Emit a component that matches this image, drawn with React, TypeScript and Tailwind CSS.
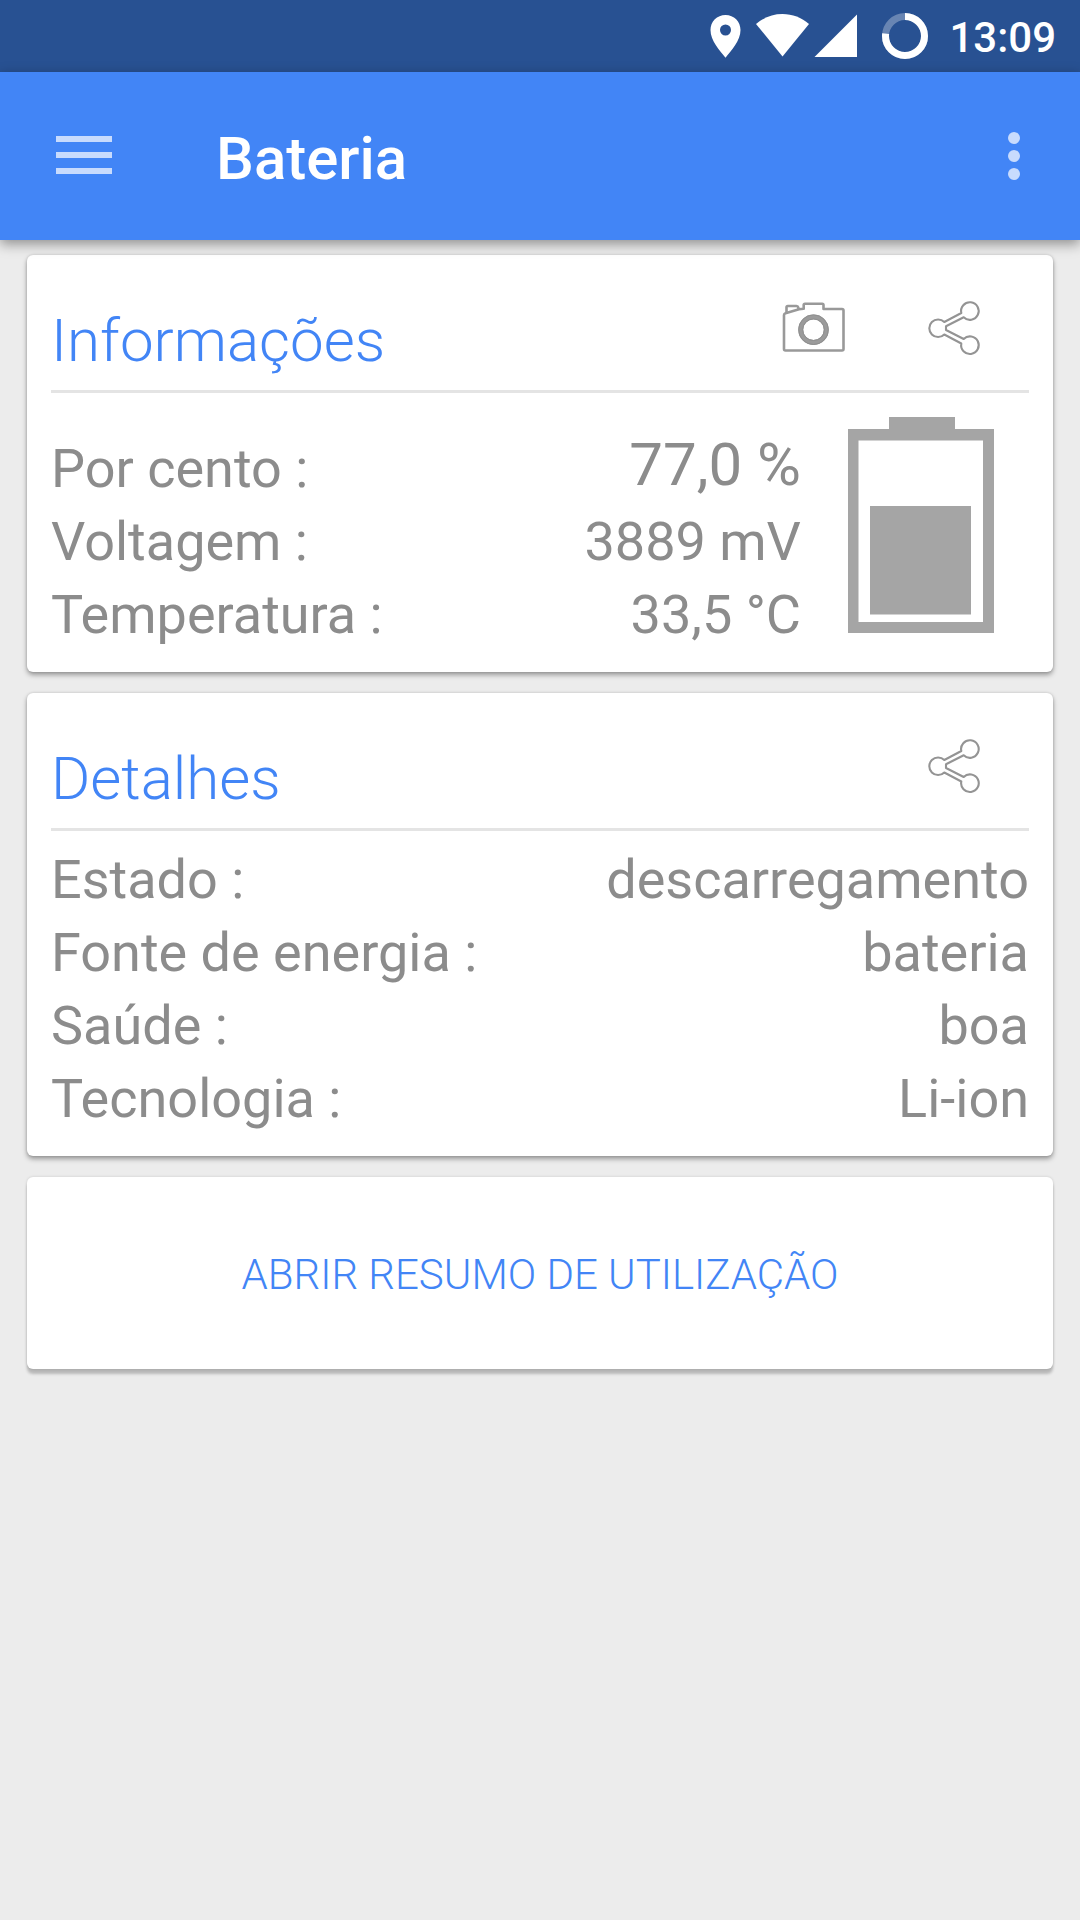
import type { ReactNode } from "react";

const level = 77;

const info = [
  { label: "Voltagem :", value: "3889 mV" },
  { label: "Temperatura :", value: "33,5 °C" },
];

const details = [
  { label: "Estado :", value: "descarregamento" },
  { label: "Fonte de energia :", value: "bateria" },
  { label: "Saúde :", value: "boa" },
  { label: "Tecnologia :", value: "Li-ion" },
];

function StatusBar() {
  return (
    <div className="flex h-[72px] items-center justify-end bg-[#285192] pr-6 text-white">
      <svg className="mr-3 h-12 w-8" viewBox="0 0 32 48" fill="currentColor">
        <path
          fillRule="evenodd"
          d="M15.5 3C7 3 .5 9.600.5 18c0 10.500 9 20.500 15 27.700C21.500 38.500 30.500 28.500 30.500 18 30.500 9.600 24 3 15.500 3Zm0 9.500a5.500 5.500 0 1 1 0 11 5.500 5.500 0 0 1 0-11Z"
        />
      </svg>
      <svg className="mr-1 h-12 w-14" viewBox="0 0 56 48" fill="currentColor">
        <path d="M2 12C9.500 5.500 18.500 2 28.500 2S47.500 5.500 55 12L28.500 44.500Z" />
      </svg>
      <svg className="mr-[23px] h-12 w-11" viewBox="0 0 44 48" fill="currentColor">
        <path d="M.5 45H43V2.500Z" />
      </svg>
      <svg className="mr-5 h-12 w-12" viewBox="0 0 48 48" fill="none" stroke="currentColor" strokeWidth="7">
        <circle cx="24" cy="24" r="19.500" strokeOpacity="0.3" />
        <circle
          cx="24"
          cy="24"
          r="19.500"
          pathLength="100"
          strokeDasharray={`${level} 100`}
          transform="rotate(-90 24 24)"
        />
      </svg>
      <span className="pt-1 text-[42px] leading-[48px] font-medium">13:09</span>
    </div>
  );
}

function AppBar() {
  return (
    <header className="relative flex h-[168px] items-center bg-[#4285f6] px-12 shadow-[0_4px_12px_rgba(0,0,0,0.4)]">
      <button aria-label="Menu" className="flex h-[72px] w-[72px] items-center justify-center">
        <svg className="h-14 w-14" viewBox="0 0 56 56" fill="#c8dbfd">
          <path d="M0 8h56v6H0zM0 24h56v6H0zM0 40h56v6H0z" />
        </svg>
      </button>
      <h1 className="ml-24 flex-1 pt-1.5 text-[60px] leading-[72px] font-medium text-white">
        Bateria
      </h1>
      <button aria-label="Mais opções" className="flex h-[72px] w-9 items-center justify-center">
        <svg className="h-12 w-3" viewBox="0 0 12 48" fill="#c8dbfd">
          <circle cx="6" cy="6" r="6" />
          <circle cx="6" cy="24" r="6" />
          <circle cx="6" cy="42" r="6" />
        </svg>
      </button>
    </header>
  );
}

function CameraIcon() {
  return (
    <svg className="h-[72px] w-[72px]" viewBox="0 0 72 72" fill="none" stroke="#999999" strokeWidth="2.600" strokeLinejoin="round">
      <path d="M7 24V58Q7 59.500 8.500 59.500H65Q66.500 59.500 66.500 58V19.500Q66.500 18 65 18H46.500V14Q46.500 12.700 45.200 12.700H28Q26.700 12.700 26.700 14V17.800L22 18.300 8.500 22.300Q7 22.800 7 24Z" />
      <path d="M9.500 22V16.300Q9.500 15 10.800 15H19.500Q21 15 21.300 16.500L21.600 18.400" />
      <circle cx="36.500" cy="38.700" r="12.800" stroke="#9b9b9b" strokeWidth="5" />
      <circle cx="36.500" cy="38.700" r="14.800" stroke="#8f8f8f" strokeWidth="1" />
      <circle cx="36.500" cy="38.700" r="10.800" stroke="#8f8f8f" strokeWidth="1" />
    </svg>
  );
}

function ShareIcon() {
  return (
    <svg className="h-[72px] w-[72px]" viewBox="0 0 72 72" fill="none" stroke="#949494" strokeWidth="2.100" strokeLinejoin="round">
      <path d="M23.300 31 40.300 22A8.800 8.800 0 1 1 42.700 26.300L25 35.300V39L42.700 48A8.800 8.800 0 1 1 40.300 52.500L23.300 43.500A8.800 8.800 0 1 1 23.300 31Z" />
    </svg>
  );
}

function Battery() {
  return (
    <svg className="h-[216px] w-[146px]" viewBox="0 0 146 216" fill="#a5a5a5" role="img" aria-label="Nível da bateria">
      <path d="M41 0H107V12H41z" />
      <path fillRule="evenodd" d="M0 12H146V216H0zM10.500 23.500V205H135V23.500z" />
      <path d="M22 89H123V197.500H22z" />
    </svg>
  );
}

function IconButton({ label, children }: { label: string; children: ReactNode }) {
  return (
    <button aria-label={label} className="flex h-full w-36 items-start justify-center pt-9">
      {children}
    </button>
  );
}

function Card({ title, actions, children }: { title: string; actions: ReactNode; children: ReactNode }) {
  return (
    <section className="rounded-md bg-white px-6 pb-[21px] shadow-[0_3px_5px_rgba(0,0,0,0.35),0_0_3px_rgba(0,0,0,0.15)]">
      <div className="flex h-[138px] items-end border-b-3 border-[#e4e4e4]">
        <h2 className="flex-1 pb-[13px] text-[60px] leading-[72px] font-light text-[#4285f6]">{title}</h2>
        {actions}
      </div>
      {children}
    </section>
  );
}

function Row({ label, value }: { label: string; value: string }) {
  return (
    <div className="flex items-end justify-between">
      <dt>{label}</dt>
      <dd>{value}</dd>
    </div>
  );
}

export default function App() {
  return (
    <div className="min-h-screen bg-[#ececec] font-['Roboto',sans-serif]">
      <StatusBar />
      <AppBar />

      <main className="space-y-[21px] px-[27px] pt-[15px]">
        <Card
          title="Informações"
          actions={
            <>
              <IconButton label="Capturar tela">
                <CameraIcon />
              </IconButton>
              <IconButton label="Compartilhar informações">
                <ShareIcon />
              </IconButton>
            </>
          }
        >
          <div className="flex items-end pt-6 text-[#8c8c8c]">
            <dl className="flex-1 text-[54px] leading-[73px]">
              {/* the charge is set larger than the other values */}
              <div className="flex items-end justify-between">
                <dt>Por cento :</dt>
                <dd className="text-[60px] leading-[81px]">{level},0 %</dd>
              </div>
              {info.map((r) => (
                <Row key={r.label} {...r} />
              ))}
            </dl>
            <div className="pr-[35px] pb-[18px] pl-[47px]">
              <Battery />
            </div>
          </div>
        </Card>

        <Card
          title="Detalhes"
          actions={
            <IconButton label="Compartilhar detalhes">
              <ShareIcon />
            </IconButton>
          }
        >
          <dl className="pt-3 text-[54px] leading-[73px] text-[#8c8c8c]">
            {details.map((r) => (
              <Row key={r.label} {...r} />
            ))}
          </dl>
        </Card>

        <button className="h-48 w-full rounded-md bg-white pt-1 text-[42px] leading-[48px] font-light text-[#4285f6] uppercase shadow-[0_5px_3px_rgba(0,0,0,0.22),0_0_3px_rgba(0,0,0,0.15)]">
          Abrir resumo de utilização
        </button>
      </main>
    </div>
  );
}
